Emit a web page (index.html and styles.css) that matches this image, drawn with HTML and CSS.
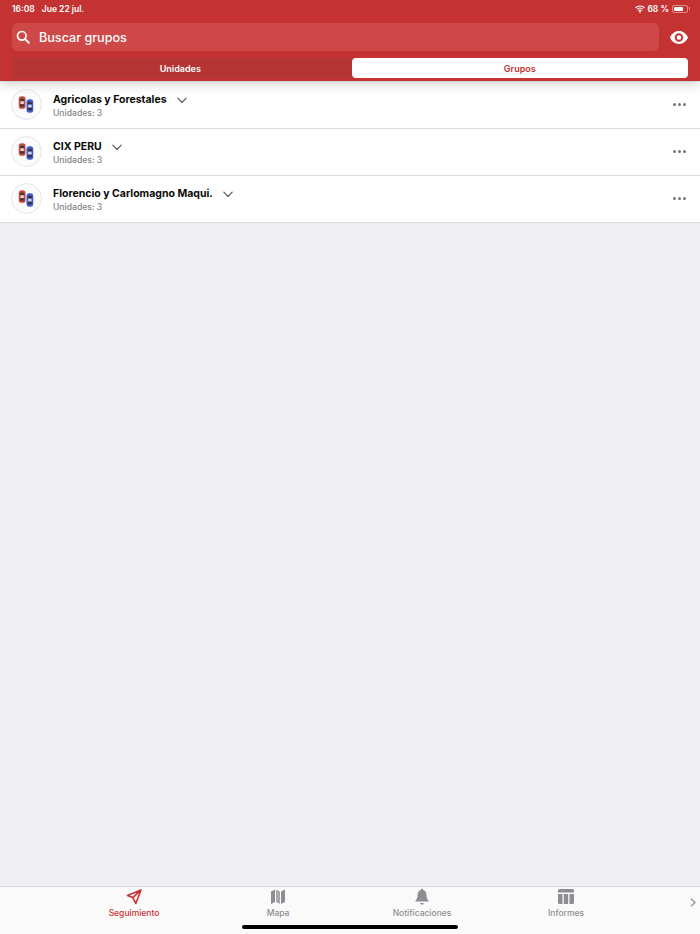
FILE: index.html
```html
<!DOCTYPE html>
<html lang="es">
<head>
  <meta charset="UTF-8" />
  <meta name="viewport" content="width=device-width, initial-scale=1.0"/>
  <title>Grupos</title>
  <link rel="stylesheet" href="styles.css">
</head>
<body>
  <svg class="defs" width="0" height="0">
    <symbol id="cars" viewBox="0 0 30 30">
      <rect x="7" y="7" width="7" height="13" rx="3" fill="#c4483f"/>
      <rect x="8.200" y="9.500" width="4.600" height="2.600" rx="1" fill="#3f3a3c"/>
      <rect x="8.800" y="12.200" width="3.400" height="2.800" fill="#e9d6d3"/>
      <rect x="8.200" y="15.200" width="4.600" height="2.600" rx="1" fill="#3f3a3c"/>
      <rect x="15" y="10" width="7" height="14" rx="3" fill="#4258cc"/>
      <rect x="16.200" y="13" width="4.600" height="2.600" rx="1" fill="#2f3445"/>
      <rect x="16.800" y="15.700" width="3.400" height="3" fill="#d5daf0"/>
      <rect x="16.200" y="18.900" width="4.600" height="2.600" rx="1" fill="#2f3445"/>
    </symbol>
    <symbol id="chev" viewBox="0 0 12 8">
      <path d="M1 1.200 6 6.400 11 1.200" fill="none" stroke="#5a5a5e" stroke-width="1.400" stroke-linecap="round" stroke-linejoin="round"/>
    </symbol>
  </svg>

  <header class="header">
    <div class="status">
      <span class="status-time">16:08</span>
      <span class="status-date">Jue 22 jul.</span>
      <span class="status-right">
        <svg class="wifi" width="10" height="8" viewBox="0 0 12 9">
          <path d="M.6 3A8 8 0 0 1 11.400 3M2.400 4.900a5.300 5.300 0 0 1 7.200 0M4.200 6.700a2.700 2.700 0 0 1 3.600 0" fill="none" stroke="#fff" stroke-width="1.300"/>
          <circle cx="6" cy="8" r="1" fill="#fff"/>
        </svg>
        <span>68 %</span>
        <span class="battery"><span class="battery-level"></span></span>
        <span class="battery-tip"></span>
      </span>
    </div>
    <div class="search-row">
      <div class="search">
        <svg width="14" height="14" viewBox="0 0 16 16">
          <circle cx="6.600" cy="6.600" r="4.900" fill="none" stroke="#fff" stroke-width="1.900"/>
          <path d="M10.300 10.300 14.600 14.600" stroke="#fff" stroke-width="2.200" stroke-linecap="round"/>
        </svg>
        <span>Buscar grupos</span>
      </div>
      <svg class="eye" width="18" height="13" viewBox="0 0 18 13">
        <path fill-rule="evenodd" fill="#fff" d="M9 0C5 0 1.800 2.600 0 6.500 1.800 10.400 5 13 9 13s7.200-2.600 9-6.500C16.200 2.600 13 0 9 0Zm0 2.300a4.200 4.200 0 1 1 0 8.400 4.200 4.200 0 0 1 0-8.400Z"/>
        <circle cx="9" cy="6.500" r="2.300" fill="#fff"/>
      </svg>
    </div>
    <div class="tabs">
      <div class="tab">Unidades</div>
      <div class="tab tab-active">Grupos</div>
    </div>
  </header>

  <main class="content">
    <ul class="list">
      <li class="row">
        <div class="avatar"><svg width="30" height="30"><use href="#cars"/></svg></div>
        <div class="info">
          <div class="name">Agricolas y Forestales <svg class="chev" width="10" height="7"><use href="#chev"/></svg></div>
          <div class="sub">Unidades: 3</div>
        </div>
        <div class="more"><i></i><i></i><i></i></div>
      </li>
      <li class="row">
        <div class="avatar"><svg width="30" height="30"><use href="#cars"/></svg></div>
        <div class="info">
          <div class="name">CIX PERU <svg class="chev" width="10" height="7"><use href="#chev"/></svg></div>
          <div class="sub">Unidades: 3</div>
        </div>
        <div class="more"><i></i><i></i><i></i></div>
      </li>
      <li class="row">
        <div class="avatar"><svg width="30" height="30"><use href="#cars"/></svg></div>
        <div class="info">
          <div class="name">Florencio y Carlomagno Maqui. <svg class="chev" width="10" height="7"><use href="#chev"/></svg></div>
          <div class="sub">Unidades: 3</div>
        </div>
        <div class="more"><i></i><i></i><i></i></div>
      </li>
    </ul>
  </main>

  <nav class="tabbar">
    <div class="tabbar-item tabbar-active">
      <svg width="18" height="18" viewBox="0 0 18 18">
        <path d="M16 2 2.500 7.400 7.800 9.600 10.800 15.500Z M7.800 9.600 16 2" fill="none" stroke="#c93232" stroke-width="1.600" stroke-linejoin="round"/>
      </svg>
      <span>Seguimiento</span>
    </div>
    <div class="tabbar-item">
      <svg width="18" height="18" viewBox="0 0 18 18">
        <path fill="#8e8e92" d="M2 3.500 6 1.500V14L2 16ZM12 3.500 16 1.500V14L12 16Z"/>
        <path fill="#a9a9ad" d="M7 1.500 11 3.500V16L7 14Z"/>
      </svg>
      <span>Mapa</span>
    </div>
    <div class="tabbar-item">
      <svg width="18" height="18" viewBox="0 0 18 18">
        <path fill="#8e8e92" d="M9 .8c.7 0 1.100.5 1.100 1.100 2.200.5 3.300 2.300 3.300 4.600 0 3.200.8 4.700 2.100 6v1H2.500v-1c1.300-1.300 2.100-2.800 2.100-6 0-2.300 1.100-4.100 3.300-4.600C7.900 1.300 8.300.8 9 .8ZM7.200 15h3.600a1.800 1.800 0 0 1-3.600 0Z"/>
      </svg>
      <span>Notificaciones</span>
    </div>
    <div class="tabbar-item">
      <svg width="18" height="18" viewBox="0 0 18 18">
        <path fill="#8e8e92" d="M2.500 1h13A1.500 1.500 0 0 1 17 2.500V4.500H1V2.500A1.500 1.500 0 0 1 2.500 1ZM1 6H5.500V16H2.500A1.500 1.500 0 0 1 1 14.500ZM6.800 6H11.200V16H6.800ZM12.500 6H17V14.500A1.500 1.500 0 0 1 15.500 16H12.500Z"/>
      </svg>
      <span>Informes</span>
    </div>
    <svg class="tabbar-next" width="6" height="9" viewBox="0 0 6 9">
      <path d="M1 .8 5 4.500 1 8.200" fill="none" stroke="#8e8e92" stroke-width="1.200"/>
    </svg>
    <div class="home-bar"></div>
  </nav>
</body>
</html>
```

FILE: styles.css
```css
* {
  margin: 0;
  padding: 0;
  box-sizing: border-box;
}
body {
  font-family: Inter, "Liberation Sans", sans-serif;
  background-color: #efeff4;
  width: 700px;
  height: 934px;
  display: flex;
  flex-direction: column;
  overflow: hidden;
}
.defs {
  position: absolute;
}
.header {
  background-color: #c43331;
  height: 81px;
  flex-shrink: 0;
  color: #fff;
  padding: 0 12px;
  box-shadow: 0 2px 12px rgba(0, 0, 0, 0.22);
  position: relative;
  z-index: 1;
}
.status {
  height: 17px;
  display: flex;
  align-items: center;
  font-size: 8.5px;
  font-weight: 600;
  gap: 7px;
}
.status-right {
  margin-left: auto;
  margin-right: -2px;
  display: flex;
  align-items: center;
  gap: 2px;
}
.battery {
  width: 16px;
  height: 8px;
  margin-left: 1px;
  border: 1px solid rgba(255, 255, 255, 0.45);
  border-radius: 2px;
  padding: 1px;
  display: flex;
}
.battery-level {
  width: 72%;
  background-color: #fff;
  border-radius: 1px;
}
.battery-tip {
  width: 1px;
  height: 3px;
  margin-left: -1px;
  background-color: rgba(255, 255, 255, 0.45);
}
.search-row {
  margin-top: 6px;
  display: flex;
  align-items: center;
  height: 28px;
}
.search {
  width: 648px;
  height: 28px;
  background-color: #cd4846;
  border-radius: 6px;
  display: flex;
  align-items: center;
  gap: 9px;
  padding-left: 4px;
  font-size: 12.6px;
  font-weight: 500;
}
.eye {
  margin-left: 11px;
}
.tabs {
  margin-top: 7px;
  display: flex;
  gap: 3px;
  height: 20px;
  background-color: #b53535;
  border-radius: 4px;
  font-size: 9px;
  font-weight: 600;
}
.tab {
  flex: 1;
  display: flex;
  align-items: center;
  justify-content: center;
  border-radius: 4px;
}
.tab-active {
  background-color: #fff;
  color: #c43331;
}
.content {
  flex: 1;
}
.list {
  list-style: none;
  padding-top: 1px;
}
.row {
  height: 47px;
  background-color: #fff;
  border-bottom: 1px solid #dcdce0;
  display: flex;
  align-items: center;
  padding: 0 14px 2px 11px;
}
.avatar {
  width: 31px;
  height: 31px;
  border-radius: 50%;
  background-color: #fbfbfb;
  border: 1px solid #e6e6e8;
  display: flex;
  align-items: center;
  justify-content: center;
  flex-shrink: 0;
}
.info {
  margin-left: 11px;
  padding-top: 4px;
  flex: 1;
}
.name {
  font-size: 10.5px;
  font-weight: 700;
  color: #0a0a0a;
  display: flex;
  align-items: center;
  gap: 10px;
  line-height: 14px;
}
.sub {
  font-size: 8.6px;
  font-weight: 500;
  color: #838388;
  line-height: 12px;
}
.more {
  display: flex;
  gap: 2px;
}
.more i {
  width: 3px;
  height: 3px;
  border-radius: 50%;
  background-color: #77777b;
}
.tabbar {
  height: 48px;
  flex-shrink: 0;
  background-color: #fafafa;
  border-top: 1px solid #d8d8de;
  position: relative;
  display: grid;
  grid-template-columns: repeat(4, 144px);
  justify-content: start;
  padding-left: 62px;
}
.tabbar-item {
  display: flex;
  flex-direction: column;
  align-items: center;
  padding-top: 1px;
  font-size: 8.5px;
  font-weight: 500;
  color: #8e8e92;
}
.tabbar-item span {
  margin-top: 2px;
}
.tabbar-active {
  color: #c93232;
}
.tabbar-next {
  position: absolute;
  right: 4px;
  top: 11px;
}
.home-bar {
  position: absolute;
  left: 242px;
  bottom: 5px;
  width: 216px;
  height: 4px;
  border-radius: 2px;
  background-color: #000;
}
```
